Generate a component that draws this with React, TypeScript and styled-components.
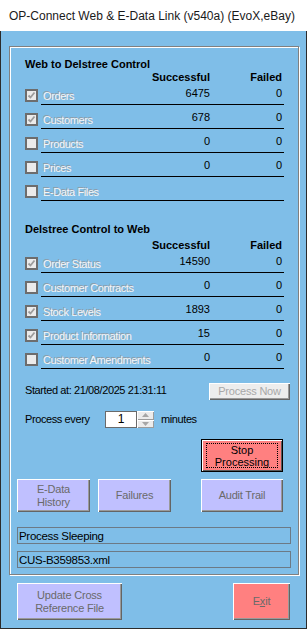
import React from "react";
import styled, { createGlobalStyle } from "styled-components";

const GlobalStyle = createGlobalStyle`
  body {
    margin: 0;
    font-family: "Liberation Sans", Arial, sans-serif;
  }
`;

const Window = styled.div`
  width: 307px;
  height: 629px;
  display: flex;
  flex-direction: column;
  box-sizing: border-box;
  overflow: hidden;
`;

const TitleBar = styled.div`
  height: 31px;
  flex-shrink: 0;
  background: #ffffff;
  display: flex;
  align-items: center;
  padding-left: 9px;
  font-size: 12px;
  color: #1a1a1a;
  white-space: nowrap;
`;

const Client = styled.div`
  flex: 1;
  background: #7fbee8;
  border: 1px solid #2b2b2b;
  border-top: none;
  padding: 15px 7px 0 8px;
  box-sizing: border-box;
`;

const Frame = styled.div`
  width: 290px;
  box-sizing: border-box;
  border: 1px solid #808080;
  box-shadow: inset 1px 1px 0 #ffffff, 1px 1px 0 #ffffff;
  padding: 11px 7px 6px 7px;
  display: flex;
  flex-direction: column;
`;

const Section = styled.div<{ $gap: number }>`
  margin-top: ${(p) => p.$gap}px;
  padding-left: 8px;
  display: flex;
  flex-direction: column;
`;

const SectionTitle = styled.div`
  font-size: 11px;
  font-weight: bold;
  line-height: 13px;
  color: #000;
`;

const Grid = styled.div`
  width: 243px;
  box-sizing: border-box;
  display: grid;
  grid-template-columns: minmax(0, 1fr) 60px 72px;
  padding: 0 2px;
`;

const HeaderRow = styled(Grid)<{ $top: number }>`
  margin-left: 16px;
  margin-top: ${(p) => p.$top}px;
  font-size: 11px;
  font-weight: bold;
  line-height: 13px;
  text-align: right;
`;

const Rows = styled.div`
  display: flex;
  flex-direction: column;
  gap: 3px;
`;

const Row = styled.div`
  display: flex;
  height: 21px;
`;

const Check = styled.div`
  width: 13px;
  height: 13px;
  margin-top: 5px;
  margin-right: 3px;
  box-sizing: border-box;
  border: 2px solid #6d6d6d;
  background: #ebebeb;
  display: flex;
  align-items: center;
  justify-content: center;
`;

const RowBox = styled(Grid)`
  height: 21px;
  border-bottom: 1px solid #000;
  align-items: end;
  padding-bottom: 1px;
  font-size: 11px;
  line-height: 13px;
  letter-spacing: -0.4px;
`;

const Label = styled.span`
  white-space: nowrap;
  color: #f6f6f6;
  text-shadow: -0.6px -0.6px 0 #8e9aa5;
`;

const Num = styled.span`
  text-align: right;
  margin-bottom: 3px;
  color: #000;
  letter-spacing: 0;
`;

const Line = styled.div<{ $top: number; $align?: string; $right?: number }>`
  margin-top: ${(p) => p.$top}px;
  display: flex;
  align-items: ${(p) => p.$align || "flex-start"};
  padding-left: 8px;
  padding-right: ${(p) => p.$right || 0}px;
  font-size: 11px;
  line-height: 13px;
  color: #000;
  letter-spacing: -0.4px;
`;

const Text = styled.span<{ $width?: number; $pad?: number }>`
  white-space: nowrap;
  width: ${(p) => (p.$width ? `${p.$width}px` : "auto")};
  padding-top: ${(p) => p.$pad || 0}px;
`;

const Btn = styled.div<{ $w: number; $h: number; $bg: string; $fg: string }>`
  width: ${(p) => p.$w}px;
  height: ${(p) => p.$h}px;
  box-sizing: border-box;
  background: ${(p) => p.$bg};
  color: ${(p) => p.$fg};
  box-shadow: inset 1px 1px 0 #ffffff, inset -1px -1px 0 #646464,
    inset -2px -2px 0 #9a9a9a;
  display: flex;
  align-items: center;
  justify-content: center;
  text-align: center;
  font-size: 11px;
  line-height: 13px;
  letter-spacing: -0.2px;
  flex-shrink: 0;
`;

const PushRight = styled.div`
  margin-left: auto;
`;

const DefaultBtn = styled.div`
  position: relative;
  width: 82px;
  height: 33px;
  box-sizing: border-box;
  border: 1px solid #000;
  background: #ff8080;
  box-shadow: inset 1px 1px 0 #ffffff, inset -1px -1px 0 #5a5a5a;
  display: flex;
  align-items: center;
  justify-content: center;
  text-align: center;
  font-size: 11px;
  line-height: 12px;
  color: #000;
  &::after {
    content: "";
    position: absolute;
    inset: 3px 4px 3px 4px;
    border: 1px dotted #000;
  }
`;

const NumInput = styled.div`
  width: 32px;
  height: 17px;
  box-sizing: border-box;
  background: #fff;
  border: 1px solid #6a6a6a;
  display: flex;
  align-items: center;
  justify-content: center;
  font-size: 12px;
  letter-spacing: 0;
`;

const Spinner = styled.div`
  width: 17px;
  height: 17px;
  display: flex;
  flex-direction: column;
`;

const SpinBtn = styled.div`
  height: 8.5px;
  box-sizing: border-box;
  background: #ececec;
  box-shadow: inset 1px 1px 0 #ffffff, inset -1px -1px 0 #9c9c9c;
  display: flex;
  align-items: center;
  justify-content: center;
`;

const ButtonRow = styled.div<{ $top: number; $right: number }>`
  margin-top: ${(p) => p.$top}px;
  display: flex;
  gap: 8px;
  padding-right: ${(p) => p.$right}px;
`;

const Status = styled.div<{ $top: number }>`
  margin-top: ${(p) => p.$top}px;
  height: 17px;
  box-sizing: border-box;
  border: 1px solid #6c7a86;
  padding-left: 1px;
  display: flex;
  align-items: center;
  font-size: 11.5px;
  color: #000;
  letter-spacing: -0.3px;
`;

const BottomBar = styled.div`
  margin-top: 8px;
  width: 290px;
  box-sizing: border-box;
  padding: 0 9px 0 8px;
  display: flex;
  justify-content: space-between;
`;

const Arrow = ({ up }: { up?: boolean }) => (
  <svg width="7" height="4" viewBox="0 0 7 4">
    <path d={up ? "M0 4 L3.5 0 L7 4 Z" : "M0 0 L3.5 4 L7 0 Z"} fill="#a6a6a6" />
  </svg>
);

const Tick = () => (
  <svg width="9" height="9" viewBox="0 0 9 9">
    <path d="M1.5 4.5 L3.5 6.5 L7.5 1.5" stroke="#9c9c9c" strokeWidth="1.8" fill="none" />
  </svg>
);

type Item = { label: string; checked: boolean; ok?: string; failed?: string };

const toWeb: Item[] = [
  { label: "Orders", checked: true, ok: "6475", failed: "0" },
  { label: "Customers", checked: true, ok: "678", failed: "0" },
  { label: "Products", checked: false, ok: "0", failed: "0" },
  { label: "Prices", checked: false, ok: "0", failed: "0" },
  { label: "E-Data Files", checked: false },
];

const fromWeb: Item[] = [
  { label: "Order Status", checked: true, ok: "14590", failed: "0" },
  { label: "Customer Contracts", checked: false, ok: "0", failed: "0" },
  { label: "Stock Levels", checked: true, ok: "1893", failed: "0" },
  { label: "Product Information", checked: true, ok: "15", failed: "0" },
  { label: "Customer Amendments", checked: false, ok: "0", failed: "0" },
];

const ItemRows = ({ items }: { items: Item[] }) => (
  <Rows>
    {items.map((it) => (
      <Row key={it.label}>
        <Check>{it.checked && <Tick />}</Check>
        <RowBox>
          <Label>{it.label}</Label>
          <Num>{it.ok}</Num>
          <Num>{it.failed}</Num>
        </RowBox>
      </Row>
    ))}
  </Rows>
);

const App = () => {
  return (
    <Window>
      <GlobalStyle />
      <TitleBar>OP-Connect Web &amp; E-Data Link (v540a) (EvoX,eBay)</TitleBar>
      <Client>
        <Frame>
          <Section $gap={0}>
            <SectionTitle>Web to Delstree Control</SectionTitle>
            <HeaderRow $top={0}>
              <span />
              <span>Successful</span>
              <span>Failed</span>
            </HeaderRow>
            <ItemRows items={toWeb} />
          </Section>
          <Section $gap={22}>
            <SectionTitle>Delstree Control to Web</SectionTitle>
            <HeaderRow $top={3}>
              <span />
              <span>Successful</span>
              <span>Failed</span>
            </HeaderRow>
            <ItemRows items={fromWeb} />
          </Section>

          <Line $top={14} $right={1}>
            <Text $pad={1}>Started at: 21/08/2025 21:31:11</Text>
            <PushRight>
              <Btn $w={81} $h={17} $bg="#ededed" $fg="#a8a8a8">
                Process Now
              </Btn>
            </PushRight>
          </Line>

          <Line $top={11} $align="center">
            <Text $width={80}>Process every</Text>
            <NumInput>1</NumInput>
            <Spinner>
              <SpinBtn>
                <Arrow up />
              </SpinBtn>
              <SpinBtn>
                <Arrow />
              </SpinBtn>
            </Spinner>
            <Text style={{ marginLeft: 7 }}>minutes</Text>
          </Line>

          <ButtonRow $top={11} $right={8}>
            <PushRight>
              <DefaultBtn>
                Stop
                <br />
                Processing
              </DefaultBtn>
            </PushRight>
          </ButtonRow>

          <ButtonRow $top={7} $right={8}>
            <Btn $w={73} $h={33} $bg="#c0c0ff" $fg="#6a6a6a">
              E-Data
              <br />
              History
            </Btn>
            <Btn $w={73} $h={33} $bg="#c0c0ff" $fg="#6a6a6a">
              Failures
            </Btn>
            <PushRight>
              <Btn $w={82} $h={33} $bg="#c0c0ff" $fg="#6a6a6a">
                Audit Trail
              </Btn>
            </PushRight>
          </ButtonRow>

          <Status $top={15}>Process Sleeping</Status>
          <Status $top={7}>CUS-B359853.xml</Status>
        </Frame>

        <BottomBar>
          <Btn $w={105} $h={37} $bg="#c0c0ff" $fg="#6a6a6a">
            Update Cross
            <br />
            Reference File
          </Btn>
          <Btn $w={57} $h={37} $bg="#ff8080" $fg="#6a6a6a">
            E<u>x</u>it
          </Btn>
        </BottomBar>
      </Client>
    </Window>
  );
};

export default App;
